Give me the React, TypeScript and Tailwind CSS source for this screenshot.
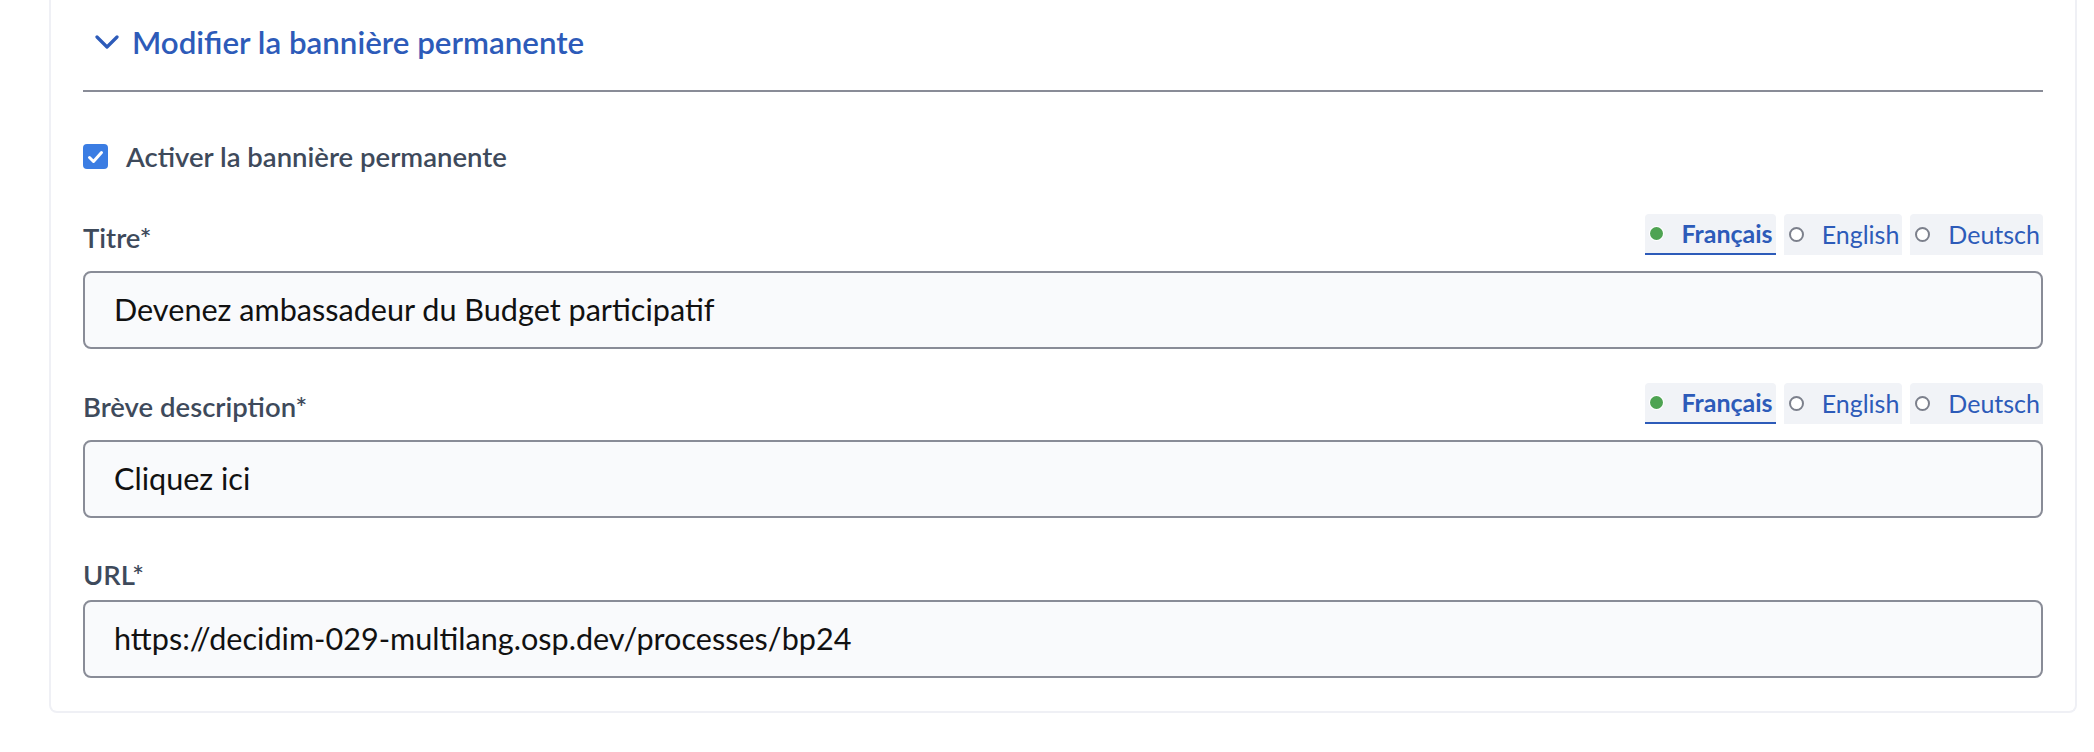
import React from 'react';

const langs = ['Français', 'English', 'Deutsch'];

function LangTabs() {
  return (
    <div className="flex items-start gap-2">
      {langs.map((l, i) => (
        <div
          key={l}
          className={`flex h-[41px] items-center rounded-t-[4px] bg-[#f1f3f7] pl-[5px] pr-[3px] text-[25px] text-[#2d5bb9] ${
            i === 0 ? 'border-b-2 border-[#2d5bb9] font-bold' : 'pb-[1px] font-normal'
          }`}
        >
          {i === 0 ? (
            <span className="mr-[18px] block h-[13px] w-[13px] rounded-full bg-[#4ea352] ring-1 ring-white" />
          ) : (
            <span className="mr-[18px] block h-[15px] w-[15px] rounded-full border-2 border-[#7c808c] bg-white" />
          )}
          {l}
        </div>
      ))}
    </div>
  );
}

function Field({ label, value, tabs }: { label: string; value: string; tabs?: boolean }) {
  return (
    <div>
      {tabs ? (
        <div className="flex h-[41px] items-center justify-between">
          <span className="pt-[5px] text-[27.5px] font-semibold text-[#3e4a5b]">{label}</span>
          <LangTabs />
        </div>
      ) : (
        <div className="h-[40px] pt-[6px] text-[27.5px] font-semibold leading-[34px] text-[#3e4a5b]">{label}</div>
      )}
      <div className={`${tabs ? 'mt-[16px]' : 'mt-[8px]'} flex h-[78px] items-center rounded-[8px] border-2 border-[#898c97] bg-[#f9fafc] px-[29px] text-[30.6px] text-[#111]`}>
        {value}
      </div>
    </div>
  );
}

export default function App() {
  return (
    <div className="min-h-[752px] bg-white pl-[49px] pr-[17px]" style={{ fontFamily: 'Lato, "Noto Sans", sans-serif' }}>
      <div className="rounded-b-[8px] border-x-2 border-b-2 border-[#eff0f5] px-8 pb-[33px]">
        <div className="flex h-[90px] items-center gap-[13px] pb-[6px]">
          <svg width="24" height="14" viewBox="0 0 24 14" className="ml-[12px]">
            <polyline points="2,2 12,12 22,2" fill="none" stroke="#2d5bb9" strokeWidth="3.2" strokeLinecap="round" strokeLinejoin="round" />
          </svg>
          <span className="text-[31.3px] font-semibold text-[#2d5bb9]">Modifier la bannière permanente</span>
        </div>
        <div className="h-[2px] bg-[#898c97]" />

        <div className="mt-[44px] flex items-center gap-[18px]">
          <span className="flex h-[25px] w-[25px] items-center justify-center rounded-[4px] bg-[#3b7de3]">
            <svg width="17" height="14" viewBox="0 0 17 14">
              <polyline points="2.5,7.5 6.5,11.5 14.5,2.5" fill="none" stroke="white" strokeWidth="3" strokeLinecap="round" strokeLinejoin="round" />
            </svg>
          </span>
          <span className="text-[27.5px] font-semibold text-[#3e4a5b]">Activer la bannière permanente</span>
        </div>

        <div className="mt-[37px] flex flex-col gap-[34px]">
          <Field label="Titre*" value="Devenez ambassadeur du Budget participatif" tabs />
          <Field label="Brève description*" value="Cliquez ici" tabs />
          <Field label="URL*" value="https://decidim-029-multilang.osp.dev/processes/bp24" />
        </div>
      </div>
    </div>
  );
}
